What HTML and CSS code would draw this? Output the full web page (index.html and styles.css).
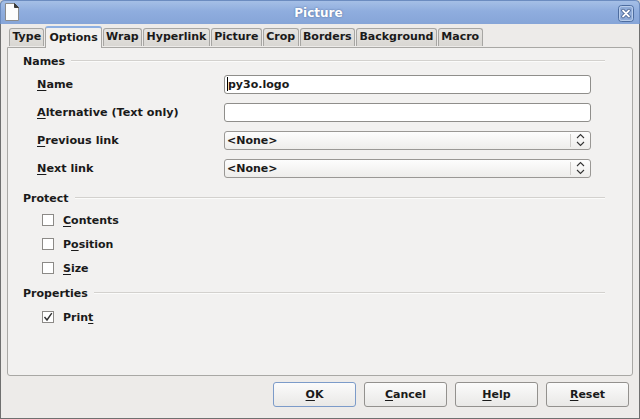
FILE: index.html
```html
<!DOCTYPE html>
<html>
<head>
<meta charset="utf-8">
<link rel="stylesheet" href="styles.css">
</head>
<body>
<div class="window">
  <div class="titlebar">
    <svg class="doc-icon" width="14" height="18" viewBox="0 0 14 18">
      <path d="M0.5 0.5 H9.5 L13.5 4.5 V17.5 H0.5 Z" fill="#fdfdfd" stroke="#8a8a8a"/>
      <path d="M9.5 0.5 V4.5 H13.5 Z" fill="#3c3c3c" stroke="#3c3c3c" stroke-linejoin="round"/>
    </svg>
    <div class="title">Picture</div>
    <div class="close">
      <svg width="16" height="17" viewBox="0 0 16 17">
        <rect x="0.5" y="0.5" width="15" height="16" rx="3" fill="#8fabd8" stroke="#4d6c9f"/>
        <rect x="1.5" y="1.5" width="13" height="14" rx="2" fill="none" stroke="#b9cdeb"/>
        <path d="M5 5.5 L11 11.5 M11 5.5 L5 11.5" stroke="#3e5a8a" stroke-width="3.4" stroke-linecap="round"/>
        <path d="M5 5.5 L11 11.5 M11 5.5 L5 11.5" stroke="#ffffff" stroke-width="1.8" stroke-linecap="round"/>
      </svg>
    </div>
  </div>

  <div class="tabs">
    <div class="tab">Type</div>
    <div class="tab active">Options</div>
    <div class="tab">Wrap</div>
    <div class="tab">Hyperlink</div>
    <div class="tab">Picture</div>
    <div class="tab">Crop</div>
    <div class="tab">Borders</div>
    <div class="tab">Background</div>
    <div class="tab">Macro</div>
  </div>

  <div class="panel">
    <div class="heading first"><span>Names</span><div class="rule"></div></div>
    <div class="row"><span class="label"><u>N</u>ame</span><div class="input"><span class="caret"></span>py3o.logo</div></div>
    <div class="row"><span class="label"><u>A</u>lternative (Text only)</span><div class="input"></div></div>
    <div class="row"><span class="label"><u>P</u>revious link</span>
      <div class="combo"><span class="combo-text">&lt;None&gt;</span><span class="combo-sep"></span>
        <svg class="spin" width="9" height="14" viewBox="0 0 9 14"><path d="M1 5 L4.5 1.5 L8 5 M1 9 L4.5 12.5 L8 9" fill="none" stroke="#333" stroke-width="1.1"/></svg>
      </div></div>
    <div class="row"><span class="label"><u>N</u>ext link</span>
      <div class="combo"><span class="combo-text">&lt;None&gt;</span><span class="combo-sep"></span>
        <svg class="spin" width="9" height="14" viewBox="0 0 9 14"><path d="M1 5 L4.5 1.5 L8 5 M1 9 L4.5 12.5 L8 9" fill="none" stroke="#333" stroke-width="1.1"/></svg>
      </div></div>

    <div class="heading protect"><span>Protect</span><div class="rule"></div></div>
    <div class="check-row"><span class="box"></span><span><u>C</u>ontents</span></div>
    <div class="check-row"><span class="box"></span><span>P<u>o</u>sition</span></div>
    <div class="check-row"><span class="box"></span><span><u>S</u>ize</span></div>

    <div class="heading properties"><span>Properties</span><div class="rule"></div></div>
    <div class="check-row print"><span class="box">
      <svg width="10" height="10" viewBox="0 0 10 10"><path d="M1.5 5 L4 8 L8.8 1.2" fill="none" stroke="#333" stroke-width="1.4"/></svg>
    </span><span>Prin<u>t</u></span></div>
  </div>

  <div class="buttons">
    <div class="btn default"><u>O</u>K</div>
    <div class="btn"><u>C</u>ancel</div>
    <div class="btn"><u>H</u>elp</div>
    <div class="btn"><u>R</u>eset</div>
  </div>
</div>
</body>
</html>
```

FILE: styles.css
```css
html, body {
  margin: 0;
  padding: 0;
  background: #d6d6d6;
}
body {
  width: 640px;
  height: 419px;
  overflow: hidden;
  font-family: "DejaVu Sans", sans-serif;
  font-weight: bold;
  font-size: 11px;
  color: #1a1a1a;
}
u {
  text-decoration: underline;
  text-underline-offset: 2px;
}
.window {
  box-sizing: border-box;
  width: 640px;
  height: 419px;
  background: #edebe9;
  border: 1px solid #6f6f6f;
  border-top: none;
  border-radius: 5px 5px 0 0;
  display: flex;
  flex-direction: column;
}
.titlebar {
  height: 24px;
  margin: 0 -1px;
  border-radius: 5px 5px 0 0;
  background: linear-gradient(#a5bfe6, #8fadde 45%, #86a5d8);
  border: 1px solid #6c8cc0;
  border-bottom: none;
  box-sizing: border-box;
  display: flex;
  align-items: center;
  padding: 0 5px 0 4px;
}
.doc-icon {
  display: block;
  margin-top: -2px;
}
.title {
  flex: 1;
  text-align: center;
  color: #ffffff;
  font-size: 12px;
  text-shadow: 0 0 2px #4b6694;
  margin-top: 1px;
}
.close svg {
  display: block;
  margin-top: 1px;
}
.tabs {
  display: flex;
  align-items: flex-end;
  gap: 1px;
  padding-left: 8px;
  height: 22px;
  margin-top: 1px;
  position: relative;
  z-index: 2;
}
.tab {
  box-sizing: border-box;
  height: 18px;
  line-height: 16px;
  padding: 0 2.4px;
  border: 1px solid #a7a6a3;
  border-bottom: none;
  border-radius: 3px 3px 0 0;
  background: linear-gradient(#e6e4e1, #d9d7d3);
  margin-bottom: 1px;
  color: #1a1a1a;
}
.tab.active {
  height: 22px;
  line-height: 19px;
  margin-bottom: -1px;
  background: #f2f1f0;
  border-color: #a7a6a3;
  border-top: 2px solid #8eb0e2;
  padding: 0 3px;
}
.panel {
  box-sizing: border-box;
  margin: 0 6px 0 6px;
  height: 329px;
  border: 1px solid #a9a8a5;
  border-radius: 0 3px 3px 3px;
  background: #f2f1f0;
  padding: 3px 27px 0 15px;
  display: flex;
  flex-direction: column;
}
.heading {
  height: 20px;
  display: flex;
  align-items: center;
  gap: 6px;
}
.heading .rule {
  flex: 1;
  height: 1px;
  background: #d3d1ce;
  border-bottom: 1px solid #fbfbfa;
}
.heading.protect { margin-top: 5px; }
.heading.properties { margin-top: 3px; }
.row {
  height: 28px;
  display: flex;
  align-items: center;
  padding-left: 14px;
  margin-top: -1px;
  margin-bottom: 1px;
}
.label {
  width: 187px;
  font-size: 11.2px;
}
.input, .combo {
  box-sizing: border-box;
  width: 367px;
  height: 19px;
  border: 1px solid #8f8e8b;
  border-radius: 3px;
  background: #ffffff;
  display: flex;
  align-items: center;
  padding-left: 2px;
  font-size: 11px;
}
.caret {
  width: 1px;
  height: 14px;
  background: #000;
}
.combo {
  background: linear-gradient(#fdfdfd, #eeedeb);
  border-color: #9a9895;
  padding-right: 5px;
}
.combo-text {
  flex: 1;
}
.combo-sep {
  width: 1px;
  height: 13px;
  background: #cfcdca;
  margin-right: 5px;
}
.spin {
  display: block;
}
.check-row {
  height: 24px;
  display: flex;
  align-items: center;
  padding-left: 19px;
  gap: 9px;
}
.check-row.print { margin-top: 2px; }
.box {
  box-sizing: border-box;
  width: 12px;
  height: 12px;
  border: 1px solid #8c8a87;
  background: #ffffff;
  display: flex;
  align-items: center;
  justify-content: center;
}
.box svg { display: block; }
.buttons {
  display: flex;
  justify-content: flex-end;
  gap: 8px;
  padding-right: 10px;
  margin-top: 6px;
}
.btn {
  box-sizing: border-box;
  width: 83px;
  height: 25px;
  border: 1px solid #93918e;
  border-radius: 3px;
  background: linear-gradient(#fbfbfb, #e9e8e6);
  display: flex;
  align-items: center;
  justify-content: center;
}
.btn.default {
  border-color: #7c9bc9;
}
```
